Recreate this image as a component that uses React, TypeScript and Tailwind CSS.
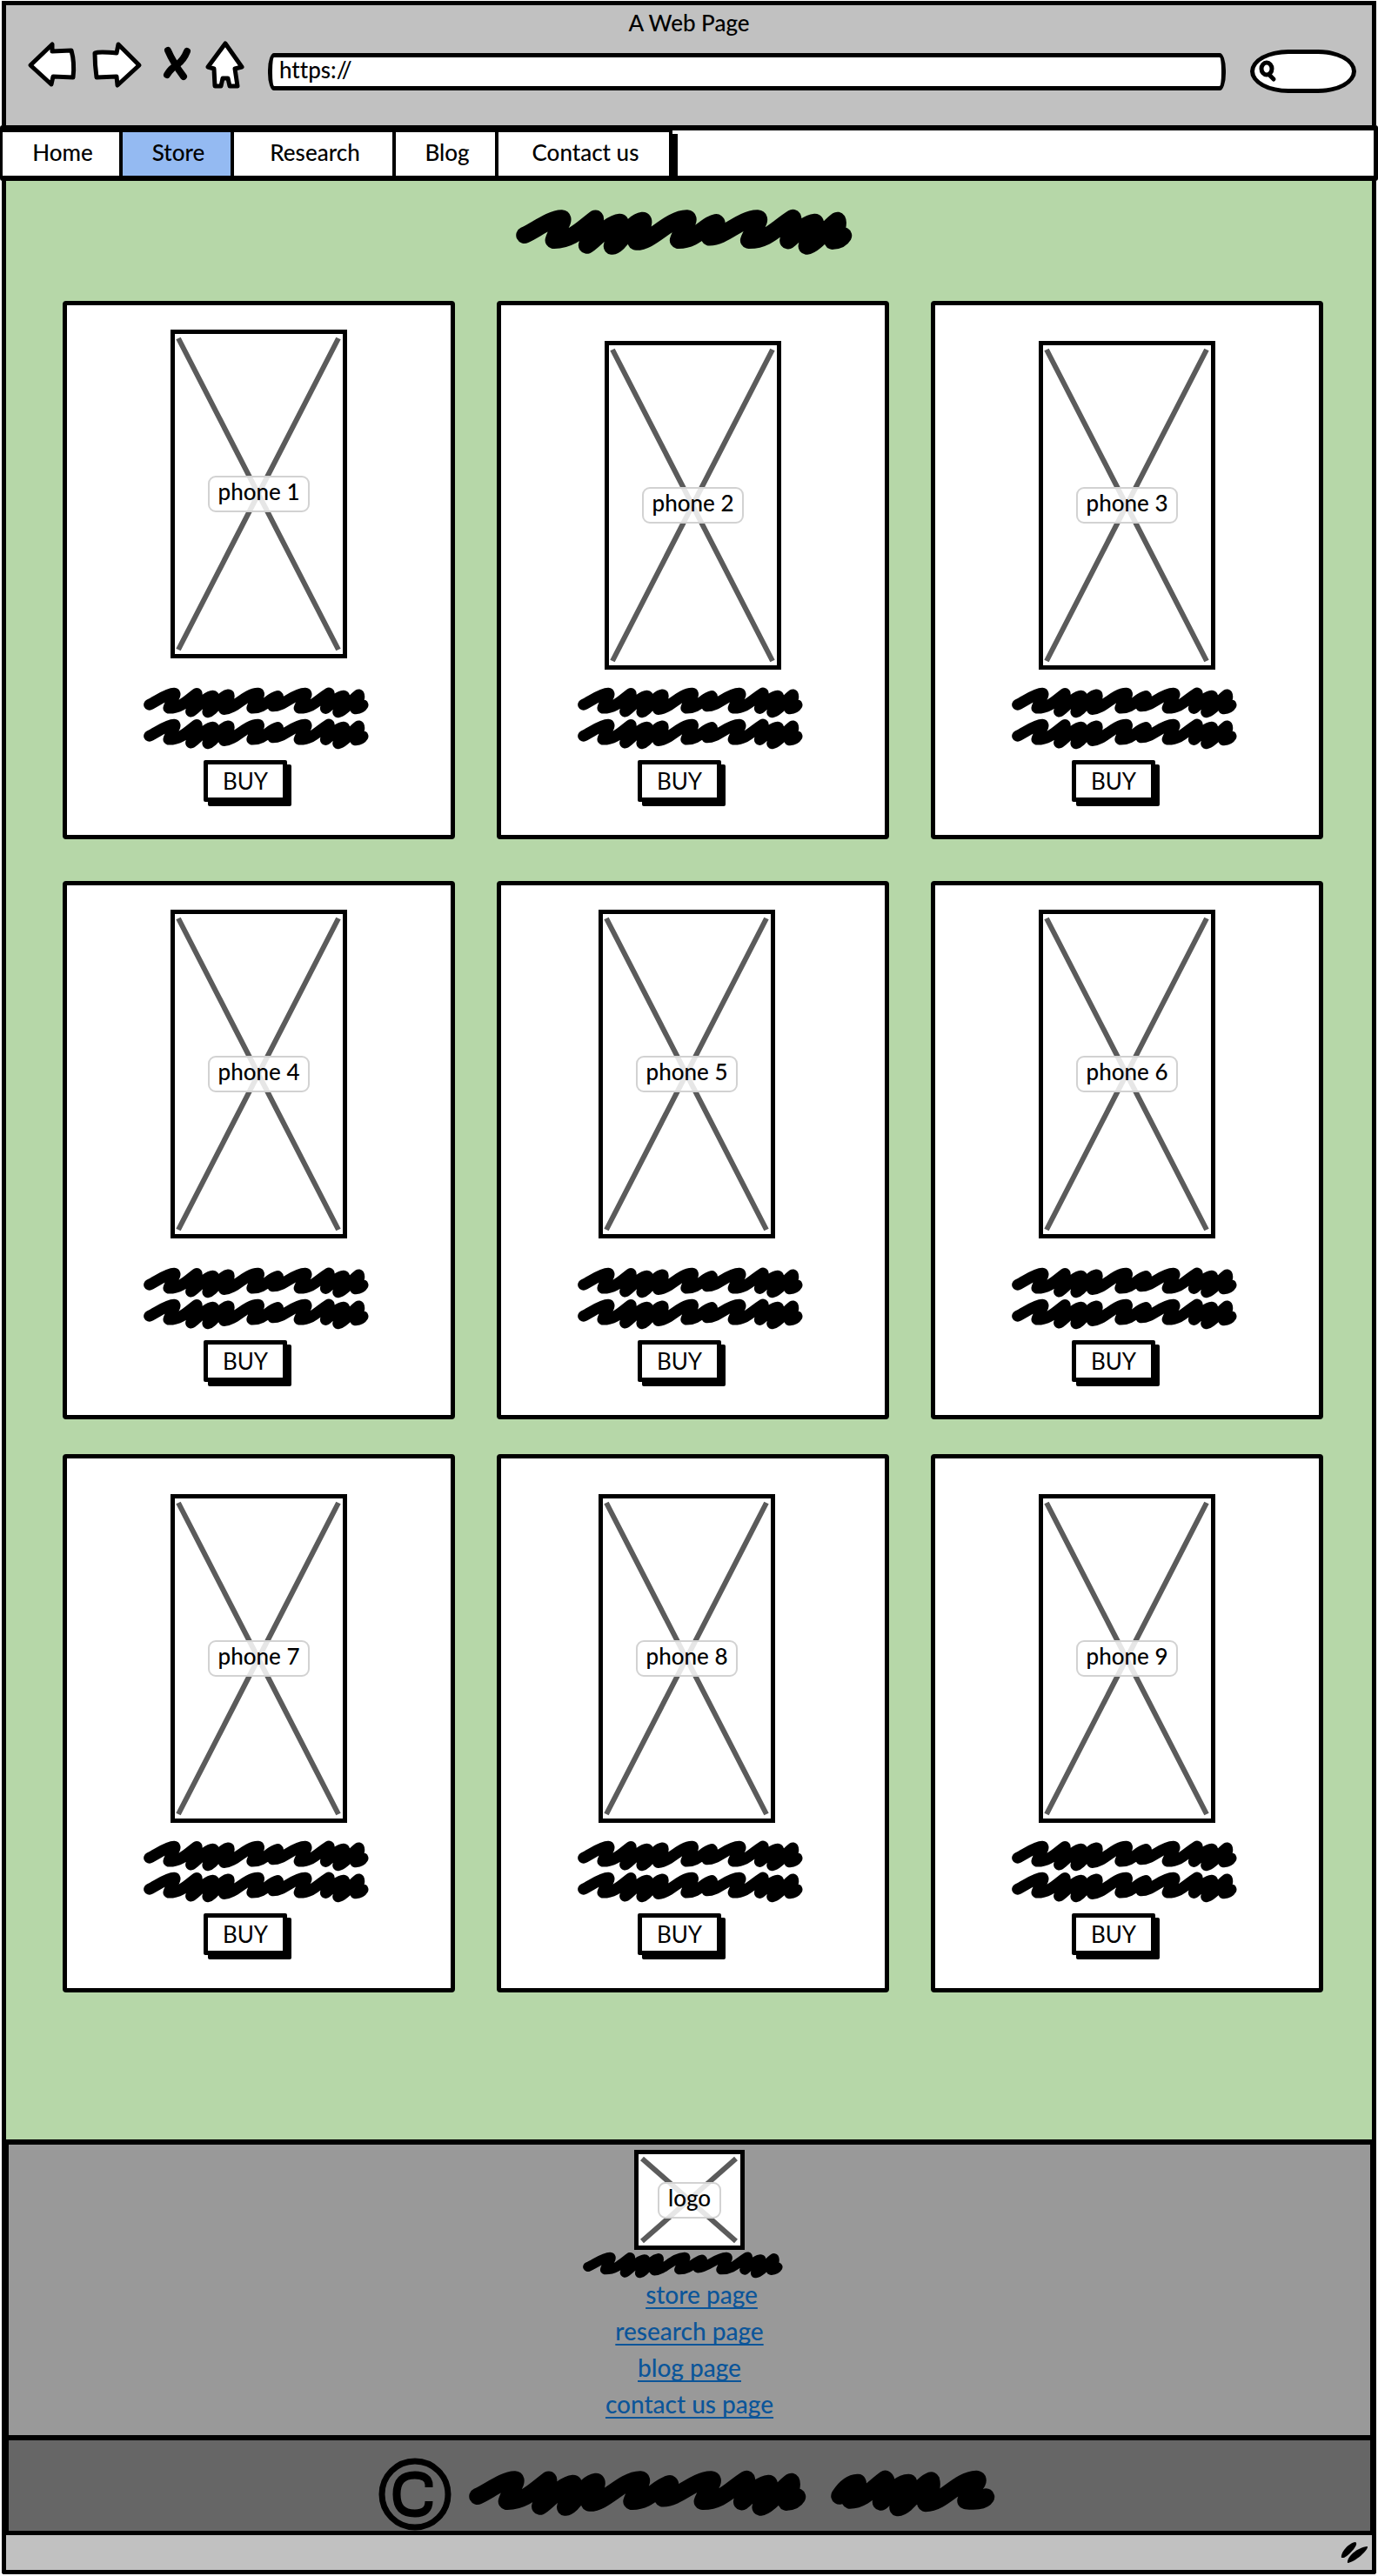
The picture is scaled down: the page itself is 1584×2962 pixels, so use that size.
import React from "react";

const scribblePaths = {
  long: {
    viewBox: "48 59 778 110",
    d: "M68 121 C95 108 130 81 153 81 C165 82 140 112 135 133 C175 134 200 106 231 82 C236 78 216 125 212 145 C225 140 262 92 288 90 C296 90 272 130 270 147 C290 145 312 90 341 86 C348 88 334 118 326 137 C362 138 400 82 443 81 C455 82 428 112 423 133 C466 134 480 98 511 91 C516 95 500 112 495 126 C530 127 566 82 606 81 C620 82 592 112 586 133 C630 134 650 104 688 80 C692 90 680 116 677 134 C690 125 715 92 739 90 C746 92 722 132 720 147 C740 145 770 100 791 86 C796 95 786 118 780 135 C792 134 801 129 805 122",
  },
  short: {
    viewBox: "0 0 378 108",
    d: "M20 60 C30 44 45 30 62 29 C66 38 48 58 44 70 C76 70 98 40 125 21 C134 28 118 58 115 74 C126 68 152 30 179 29 C184 44 158 70 154 87 C176 86 204 34 231 24 C236 42 224 62 218 77 C260 76 290 23 335 21 C348 24 316 50 310 71 C330 73 350 73 357 62",
  },
};

function Scribble({ kind, className }: { kind: "long" | "short"; className: string }) {
  const shape = scribblePaths[kind];
  return (
    <svg
      viewBox={shape.viewBox}
      preserveAspectRatio="none"
      aria-hidden="true"
      className={`block shrink-0 overflow-visible ${className}`}
      fill="none"
      stroke="#000"
      strokeWidth="39"
      strokeLinecap="round"
      strokeLinejoin="round"
    >
      <path d={shape.d} />
    </svg>
  );
}

function Placeholder({
  label,
  className,
  width,
  height,
}: {
  label: string;
  className: string;
  width: number;
  height: number;
}) {
  return (
    <div
      className={`grid shrink-0 place-items-center border-[5px] border-black bg-white ${className}`}
    >
      <svg
        viewBox={`0 0 ${width} ${height}`}
        aria-hidden="true"
        className="col-start-1 row-start-1 h-full w-full"
        stroke="#5b5b5b"
        strokeWidth="6"
      >
        <path d={`M4 5 L${width - 5} ${height - 5} M${width - 5} 5 L4 ${height - 5}`} />
      </svg>
      <span className="col-start-1 row-start-1 rounded-[9px] border-2 border-[#d2d2d2] bg-white/85 px-2.5 pb-1.5 leading-8">
        {label}
      </span>
    </div>
  );
}

type Phone = { name: string; frame: string };

const high = "pt-7 pl-[119px]";
const low = "pt-[41px] pl-[119px]";

const rows: { gap: string; phones: Phone[] }[] = [
  {
    gap: "mb-12",
    phones: [
      { name: "phone 1", frame: high },
      { name: "phone 2", frame: low },
      { name: "phone 3", frame: low },
    ],
  },
  {
    gap: "mb-10",
    phones: [
      { name: "phone 4", frame: high },
      { name: "phone 5", frame: "pt-7 pl-28" },
      { name: "phone 6", frame: high },
    ],
  },
  {
    gap: "mb-0",
    phones: [
      { name: "phone 7", frame: low },
      { name: "phone 8", frame: "pt-[41px] pl-28" },
      { name: "phone 9", frame: low },
    ],
  },
];

function ProductCard({ phone }: { phone: Phone }) {
  return (
    <article className="rounded-[4px] border-[5px] border-black bg-white pb-[38px]">
      <div className={`h-[439px] ${phone.frame}`}>
        <Placeholder label={phone.name} width={193} height={368} className="h-[378px] w-[203px]" />
      </div>
      <Scribble kind="long" className="ml-[88px] h-9 w-[259px]" />
      <Scribble kind="long" className="ml-[88px] h-9 w-[259px]" />
      <button
        type="button"
        aria-label={`BUY ${phone.name}`}
        className="mt-3 ml-[157px] block h-12 w-24 rounded-[2px] border-[5px] border-black bg-white leading-8 font-normal shadow-[5px_5px_0_#000]"
      >
        BUY
      </button>
    </article>
  );
}

const navItems = [
  { label: "Home", width: "w-[138px]", active: false },
  { label: "Store", width: "w-32", active: true },
  { label: "Research", width: "w-[186px]", active: false },
  { label: "Blog", width: "w-[118px]", active: false },
  { label: "Contact us", width: "w-[200px]", active: false },
];

const footerLinks = [
  { label: "store page", className: "ml-7" },
  { label: "research page", className: "" },
  { label: "blog page", className: "" },
  { label: "contact us page", className: "" },
];

function ToolButton({ label, d, className }: { label: string; d: string; className: string }) {
  return (
    <button type="button" aria-label={label} className={`h-14 shrink-0 ${className}`}>
      <svg
        viewBox="0 0 60 56"
        className="block h-14 w-[60px]"
        fill="#fff"
        stroke="#000"
        strokeWidth="5"
        strokeLinejoin="round"
        strokeLinecap="round"
      >
        <path d={d} />
      </svg>
    </button>
  );
}

export default function App() {
  return (
    <div className="flex min-h-screen flex-col bg-white pt-px font-[Lato,sans-serif] text-[26px] font-medium text-black [font-variant-ligatures:none]">
      <header className="mx-0.5 h-[143px] border-x-[5px] border-t-[5px] border-black bg-[#c1c1c1]">
        <div className="pt-0.5 text-center leading-9">A Web Page</div>
        <div className="mt-0.5 flex h-14 items-center pr-[18px] pl-[23px]">
          <ToolButton
            label="Back"
            className="w-[60px]"
            d="M5 29 L30 5 L30 13 L52 12 Q56 26 54 43 L31 42 L29 51 Z"
          />
          <ToolButton
            label="Forward"
            className="ml-[14px] w-[60px]"
            d="M5 15 Q10 13 30 15 L32 5 L56 29 L31 52 L30 42 L7 43 Q5 28 5 15 Z"
          />
          <button type="button" aria-label="Stop" className="ml-5 h-14 w-10 shrink-0">
            <svg
              viewBox="0 0 40 56"
              className="block h-14 w-10"
              fill="none"
              stroke="#000"
              strokeWidth="8"
              strokeLinecap="round"
              aria-hidden="true"
            >
              <path d="M9 12 Q15 26 27 42" />
              <path d="M31 13 Q27 23 20 28 Q12 33 8 40" />
            </svg>
          </button>
          <ToolButton
            label="Home page"
            className="ml-1 w-[60px]"
            d="M31 4 L50 31 L42 33 L45 53 L36 53 L34 44 L28 44 L26 53 L19 53 L18 33 L11 31 Z"
          />
          <input
            type="text"
            aria-label="Address"
            defaultValue="https://"
            className="mt-4 ml-5 h-[43px] min-w-0 flex-1 rounded-[7px/20px] border-[5px] border-black bg-white px-2 pb-1 outline-none"
          />
          <label className="mt-4 ml-7 flex h-[50px] w-[122px] shrink-0 items-center overflow-hidden rounded-[44px/25px] border-[5px] border-black bg-white">
            <svg
              viewBox="0 0 24 26"
              className="ml-1 h-[26px] w-6 shrink-0"
              fill="none"
              stroke="#000"
              strokeWidth="5"
              strokeLinecap="round"
              aria-hidden="true"
            >
              <ellipse cx="10" cy="10" rx="6" ry="7" />
              <path d="M13 17 L18 22" />
            </svg>
            <input type="search" aria-label="Search" className="w-full min-w-0 bg-transparent outline-none" />
          </label>
        </div>
      </header>

      <nav
        aria-label="Main"
        className="flex h-16 rounded-[3px] border-y-[6px] border-r-[5px] border-l-[3px] border-black bg-white"
      >
        <ul className="flex border-t-2 border-black shadow-[6px_4px_0_#000]">
          {navItems.map((item) => (
            <li key={item.label} className={`border-r-4 border-black ${item.width}`}>
              <a
                href="#"
                aria-current={item.active ? "page" : undefined}
                className={`flex h-full items-center justify-center pb-1 pl-1 ${
                  item.active ? "bg-[#94baf2]" : "bg-white"
                }`}
              >
                {item.label}
              </a>
            </li>
          ))}
        </ul>
      </nav>

      <main className="mx-0.5 flex-1 border-x-[5px] border-black bg-[#b6d7a8] pt-8 pr-14 pb-[169px] pl-[65px]">
        <h1 aria-label="Store" className="mb-[52px] flex justify-center pr-5">
          <Scribble kind="long" className="h-[54px] w-[387px]" />
        </h1>
        {rows.map((row) => (
          <section key={row.phones[0].name} className={`grid grid-cols-3 gap-12 ${row.gap}`}>
            {row.phones.map((phone) => (
              <ProductCard key={phone.name} phone={phone} />
            ))}
          </section>
        ))}
      </main>

      <footer className="mx-0.5 border-r-[7px] border-l-8 border-black">
        <div className="flex flex-col items-center border-t-[6px] border-black bg-[#999] pt-1.5 pb-5">
          <Placeholder label="logo" width={117} height={105} className="h-[115px] w-[127px]" />
          <Scribble kind="long" className="mt-0.5 mr-4 h-[31px] w-[230px]" />
          <nav aria-label="Footer" className="mt-0.5 flex flex-col items-center gap-2.5 text-[28px] leading-8">
            {footerLinks.map((link) => (
              <a
                key={link.label}
                href="#"
                className={`text-[#0b5599] underline decoration-2 underline-offset-4 [text-decoration-skip-ink:none] ${link.className}`}
              >
                {link.label}
              </a>
            ))}
          </nav>
        </div>
        <div className="flex items-start justify-center border-t-[6px] border-b-[5px] border-black bg-[#666] pt-5 pr-1.5">
          <svg
            viewBox="0 0 84 84"
            role="img"
            aria-label="Copyright"
            className="h-[84px] w-[84px]"
            fill="none"
            stroke="#000"
          >
            <circle cx="42" cy="42" r="38" strokeWidth="7" />
            <path
              strokeWidth="9"
              d="M58 34 V31 C58 24 52 20 42 20 C27 20 21 28 21 42 C21 56 27 64 42 64 C53 64 58 59 58 50"
            />
          </svg>
          <Scribble kind="long" className="mt-3.5 ml-5 h-[54px] w-[388px]" />
          <Scribble kind="short" className="mt-3.5 ml-7 h-[54px] w-[189px]" />
        </div>
      </footer>

      <div className="mx-0.5 mb-0.5 flex h-[45px] items-center justify-end rounded-b-[3px] border-x-[5px] border-b-[5px] border-black bg-[#c1c1c1] pr-1">
        <svg viewBox="0 0 32 28" className="h-7 w-8" aria-hidden="true">
          <path d="M1 20 C0 14 9 3 17 2 C22 4 10 17 4 20 Z M8 26 C7 19 19 8 31 7 C32 11 17 25 8 26 Z" />
        </svg>
      </div>
    </div>
  );
}
